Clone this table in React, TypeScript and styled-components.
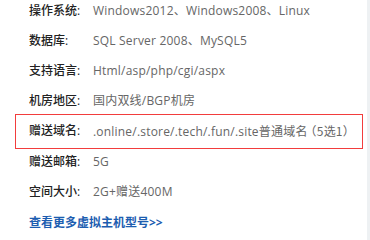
import React from "react";
import styled, { createGlobalStyle, css } from "styled-components";

const GlobalStyle = createGlobalStyle`
  html, body {
    margin: 0;
    padding: 0;
    background: #fff;
  }
  body {
    font-family: "Open Sans", "Noto Sans CJK SC", sans-serif;
    font-size: 12px;
  }
`;

const Page = styled.div`
  display: flex;
  width: 370px;
  height: 240px;
  overflow: hidden;
`;

const Content = styled.div`
  flex: 1;
  display: flex;
  flex-direction: column;
  gap: 8px;
  padding-left: 29px;
`;

const SideStrip = styled.div`
  width: 12px;
  background: #eef1f3;
`;

const Row = styled.div<{ $highlight?: boolean }>`
  display: flex;
  line-height: 22px;
  white-space: nowrap;

  ${({ $highlight }) => $highlight && css`
    margin: -6px 4px -6px -14px;
    padding: 5px 13px;
    border: 1px solid #f23d3d;
  `};
`;

const Label = styled.span`
  width: 64px;
  flex-shrink: 0;
  color: #222;
  font-weight: 500;
`;

const Value = styled.span`
  color: #666;
  letter-spacing: 0.2px;
`;

// full-width brackets drawn at half width, as in the reference
const Note = styled.span`
  font-family: "Noto Sans CJK SC", sans-serif;
  font-feature-settings: "halt";
  margin-left: 3px;
`;

const MoreLink = styled.a`
  margin-top: 1px;
  line-height: 22px;
  color: #1c5db0;
  font-weight: bold;
  text-decoration: none;
`;

type Spec = { label: string; value: string; note?: string; highlight?: boolean };

const SPECS: Spec[] = [
  { label: "操作系统:", value: "Windows2012、Windows2008、Linux" },
  { label: "数据库:", value: "SQL Server 2008、MySQL5" },
  { label: "支持语言:", value: "Html/asp/php/cgi/aspx" },
  { label: "机房地区:", value: "国内双线/BGP机房" },
  { label: "赠送域名:", value: ".online/.store/.tech/.fun/.site普通域名", note: "（5选1）", highlight: true },
  { label: "赠送邮箱:", value: "5G" },
  { label: "空间大小:", value: "2G+赠送400M" },
];

const App = () => (
  <Page>
    <GlobalStyle />
    <Content>
      {SPECS.map(spec => (
        <Row key={spec.label} $highlight={spec.highlight}>
          <Label>{spec.label}</Label>
          <Value>
            {spec.value}
            {spec.note && <Note>{spec.note}</Note>}
          </Value>
        </Row>
      ))}
      <MoreLink href="#">查看更多虚拟主机型号&gt;&gt;</MoreLink>
    </Content>
    <SideStrip />
  </Page>
);

export default App;
